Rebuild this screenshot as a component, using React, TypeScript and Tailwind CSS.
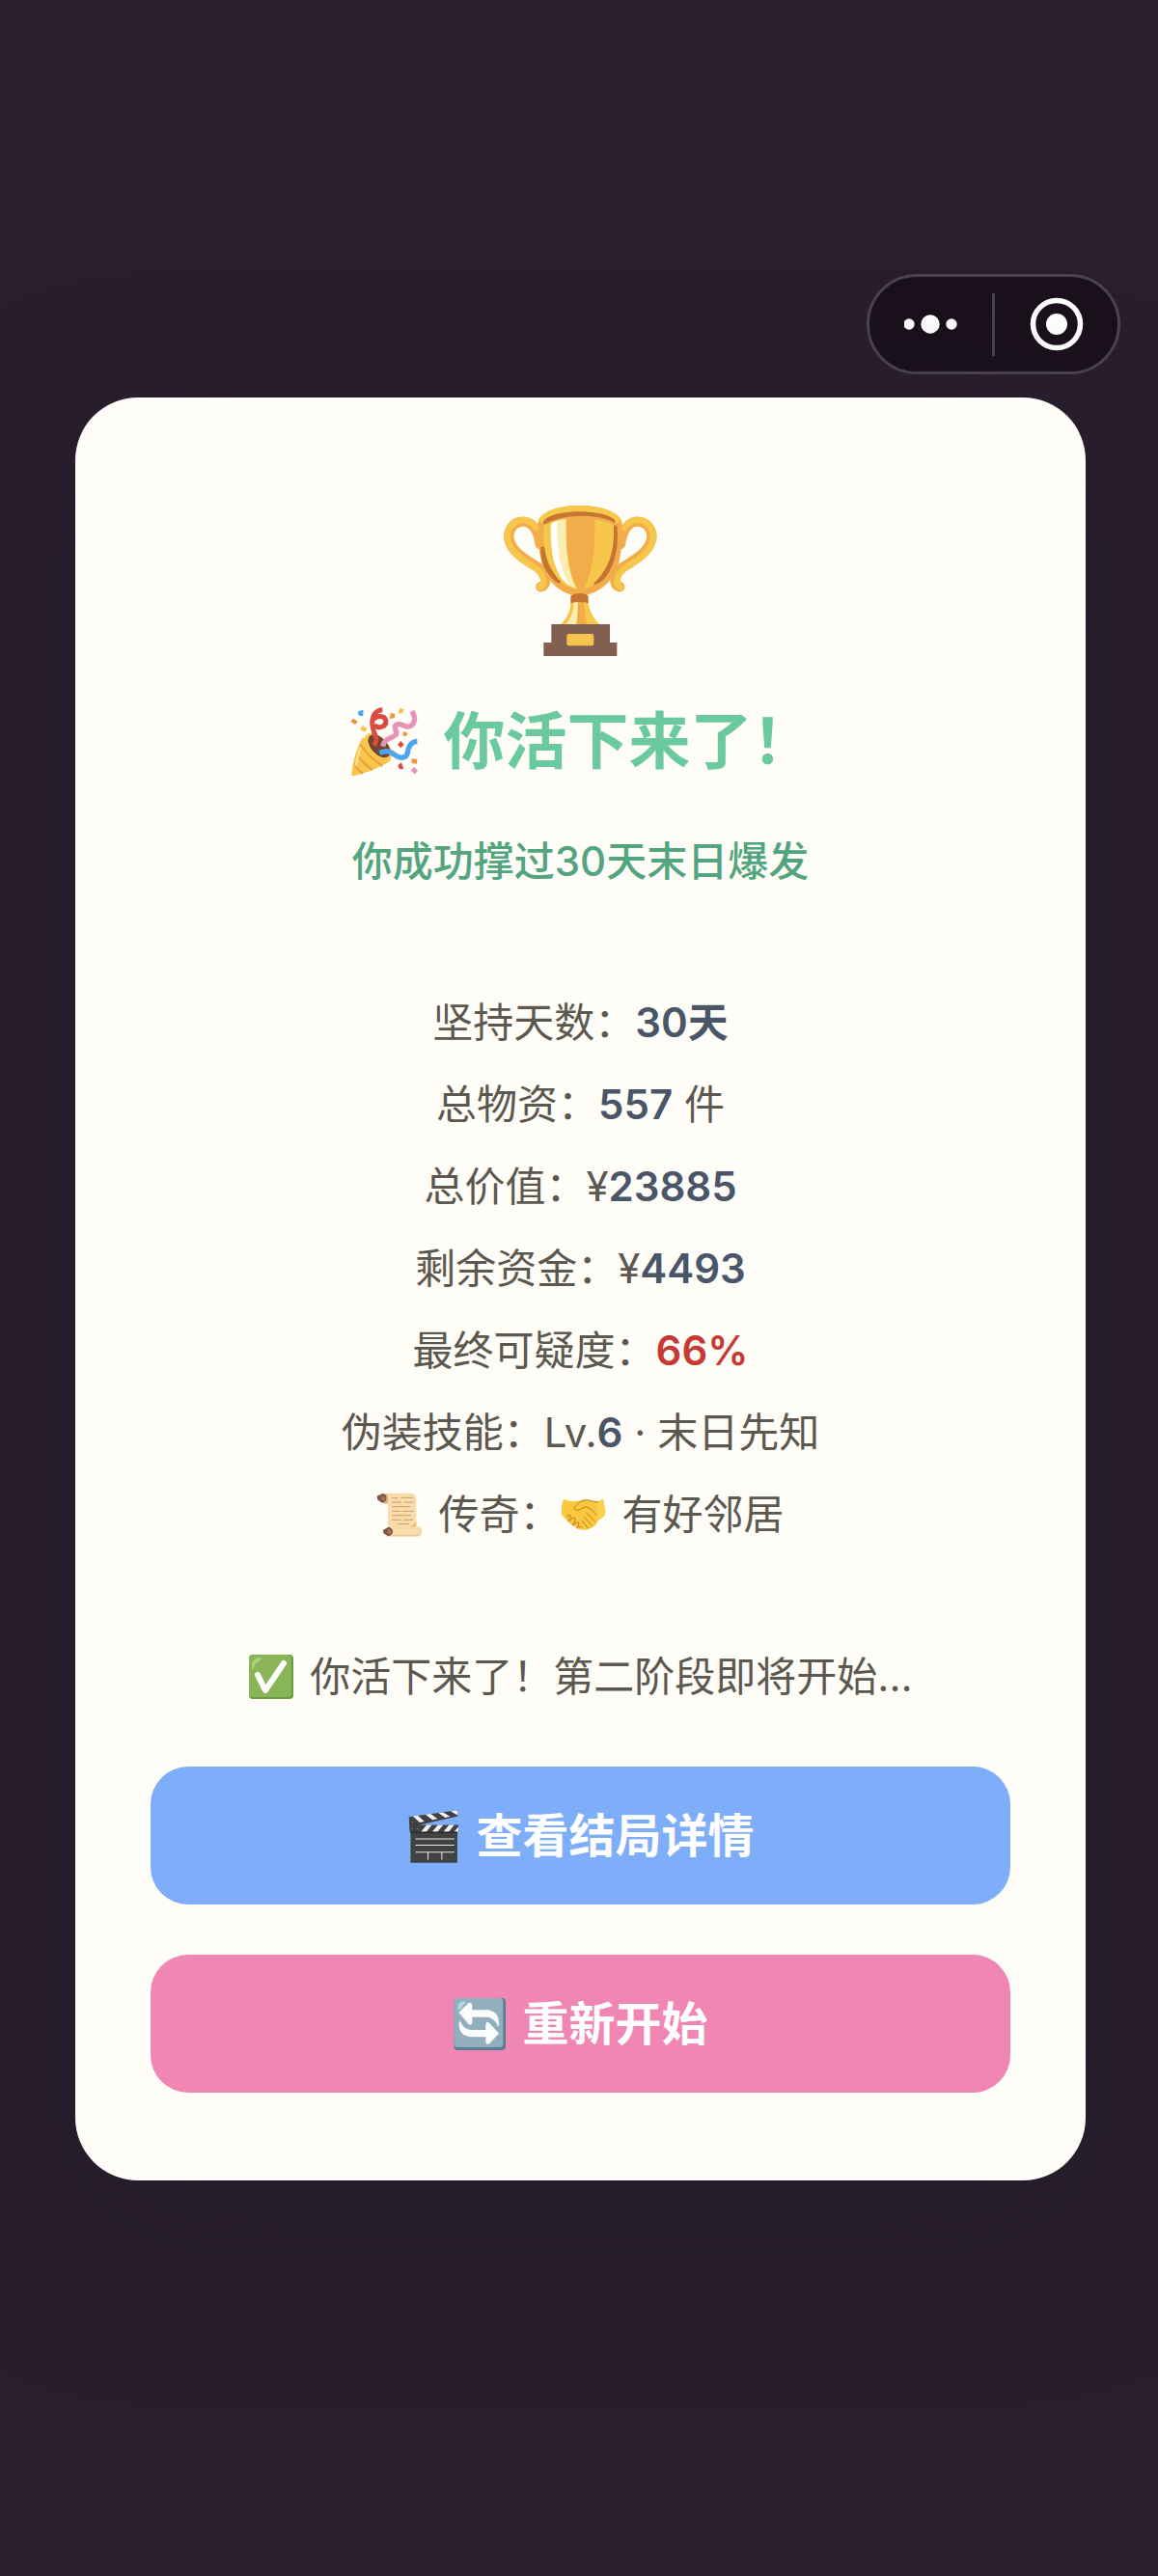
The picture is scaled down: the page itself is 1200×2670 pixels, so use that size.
import React from "react";

type IconProps = { className?: string };

const stats = [
  { label: "坚持天数：", value: "30天" },
  { label: "总物资：", value: "557", suffix: " 件" },
  { label: "总价值：¥", value: "23885" },
  { label: "剩余资金：¥", value: "4493" },
  { label: "最终可疑度：", value: "66%", danger: true },
  { label: "伪装技能：Lv.", value: "6", suffix: " · 末日先知" },
];

export default function App() {
  return (
    <div className="flex min-h-screen flex-col bg-[#2a1e2d] pt-[284px] pb-24 font-['Inter','Noto_Sans_CJK_SC',sans-serif]">
      <Capsule />

      <main className="mt-6 mr-[75px] ml-[78px] rounded-[65px] bg-[#fffdf7] px-[78px] pt-[110px] pb-[91px] text-center text-[#5c5850] shadow-[0_52px_156px_rgba(29,26,40,0.5)]">
        <Trophy className="mx-auto h-40 w-[162px]" />

        <h1 className="mt-[37px] flex items-center justify-center gap-6 text-[64px] leading-[98px] font-bold text-[#6bc99f]">
          <Popper className="size-[76px]" />
          你活下来了！
        </h1>

        <div className="mt-[33px] text-[42px] leading-[85px]">
          <p className="font-medium text-[#52a57e]">你成功撑过30天末日爆发</p>

          <ul className="mt-[82px]">
            {stats.map((s) => (
              <li key={s.label} className="whitespace-pre">
                {s.label}
                <strong
                  className={
                    s.danger
                      ? "font-semibold text-[#c53a32]"
                      : "font-semibold text-[#4a5568]"
                  }
                >
                  {s.value}
                </strong>
                {s.suffix}
              </li>
            ))}
            <li className="flex items-center justify-center gap-4">
              <Scroll className="size-12" />
              <span className="flex items-center">
                传奇：
                <Handshake className="size-12" />
              </span>
              有好邻居
            </li>
          </ul>

          <p className="mt-[83px] flex items-center justify-center gap-4">
            <Check className="size-12" />
            你活下来了！第二阶段即将开始...
          </p>
        </div>

        <div className="mt-[51px] flex flex-col gap-[52px] text-[48px] leading-[71px] font-semibold text-white">
          <button
            type="button"
            className="flex items-center justify-center gap-4 rounded-[39px] bg-[#7eaef9] py-9"
          >
            <Clapper className="size-14" />
            查看结局详情
          </button>
          <button
            type="button"
            className="flex items-center justify-center gap-4 rounded-[39px] bg-[#f086b4] py-9"
          >
            <Restart className="size-14" />
            重新开始
          </button>
        </div>
      </main>
    </div>
  );
}

// mini program menu in the top right corner
function Capsule() {
  return (
    <div className="mr-[39px] flex h-[104px] w-[263px] items-center self-end rounded-full border-[3px] border-[#4b444e] bg-[#1a111c]">
      <button type="button" aria-label="更多" className="flex flex-1 justify-center">
        <svg viewBox="0 0 56 20" className="h-5 w-14" fill="#fff">
          <circle cx="5" cy="10" r="5.7" />
          <circle cx="27" cy="10" r="9.7" />
          <circle cx="49" cy="10" r="5.7" />
        </svg>
      </button>
      <span className="h-[65px] w-[3px] bg-[#48414b]" />
      <button type="button" aria-label="关闭" className="flex flex-1 justify-center">
        <svg viewBox="0 0 56 56" className="size-14" fill="#fff">
          <circle cx="28" cy="28" r="24.5" fill="none" stroke="#fff" strokeWidth="5.5" />
          <circle cx="28" cy="28" r="11" />
        </svg>
      </button>
    </div>
  );
}

function Trophy({ className }: IconProps) {
  return (
    <svg viewBox="122 96 486 480" className={className} aria-hidden="true">
      {/* handles */}
      <g fill="none" strokeLinecap="round">
        <path d="M238 222C232 180 215 152 185 152C155 152 136 180 142 208C150 245 190 268 225 290C262 312 262 350 240 355" stroke="#f2ac49" strokeWidth="31" />
        <path d="M488 222C494 180 511 152 541 152C571 152 590 180 584 208C576 245 536 268 501 290C464 312 464 350 486 355" stroke="#f2ac49" strokeWidth="31" />
        <path d="M228 172C216 156 203 147 185 147C152 147 131 180 137 208C145 248 186 273 220 294C252 314 256 350 238 356" stroke="#f6c74a" strokeWidth="20" />
        <path d="M498 172C510 156 523 147 541 147C574 147 595 180 589 208C581 248 540 273 506 294C474 314 470 350 488 356" stroke="#f6c74a" strokeWidth="20" />
      </g>
      {/* bowl */}
      <path d="M232 150C246 118 300 102 360 102C420 102 478 118 492 150C496 190 492 250 480 290C462 345 410 382 360 382C312 382 262 345 246 290C234 250 228 190 232 150Z" fill="#f2ac49" />
      <path d="M232 150C246 118 300 102 360 102C420 102 478 118 492 150L474 158C440 120 282 120 248 158Z" fill="#f6c74a" />
      <path d="M248 158C246 152 252 145 260 140C300 114 420 114 462 140C470 145 474 152 470 156C420 124 300 128 252 160Z" fill="#c5752f" />
      <path d="M250 166C282 136 436 136 468 166C474 230 460 300 425 335C405 353 380 362 360 362C335 362 305 350 285 322C250 280 246 220 250 166Z" fill="#f6c74a" />
      <path d="M272 160C286 148 304 144 320 143V220C322 285 335 330 352 360C322 355 294 320 280 270C272 235 270 190 272 160Z" fill="#fbeeb2" />
      <path d="M272 160C278 153 284 151 291 149C289 235 300 310 334 352C310 342 292 318 280 270C272 235 270 190 272 160Z" fill="#fff" />
      <path d="M319 143Q364 139 408 146C410 235 400 320 372 362Q364 366 353 360C330 315 317 250 319 143Z" fill="#f2ac49" />
      <path d="M240 232C246 228 250 228 252 234C258 280 276 310 303 340C300 344 296 344 290 341C256 315 238 280 240 232Z" fill="#c5752f" />
      <path d="M467 168C472 160 478 164 478 174C484 250 458 335 406 349C402 346 406 342 412 337C452 296 470 245 467 168Z" fill="#c5752f" />
      {/* stem */}
      <path d="M333 404H388C392 432 405 453 423 472H302C320 453 332 432 333 404Z" fill="#f6c74a" />
      <path d="M344 402H356V472H318C334 452 342 432 344 402Z" fill="#fbeeb2" />
      <path d="M355 402H374C375 430 380 453 384 472H351C354 450 355 430 355 402Z" fill="#f2ac49" />
      <path d="M333 384C340 372 381 372 388 384V406Q360 398 333 406Z" fill="#c5752f" />
      <path d="M273 471H455V528H477V570H249V528H273Z" fill="#835f52" />
      <rect x="321" y="501" width="84" height="37" rx="6" fill="#f4c44c" />
    </svg>
  );
}

function Popper({ className }: IconProps) {
  return (
    <svg viewBox="56 34 228 228" className={className} aria-hidden="true">
      <path d="M104 136C84 170 72 215 69 252Q69 258 78 256C118 246 165 228 192 208Z" fill="#f6c74a" />
      <g fill="none" stroke="#eda041" strokeWidth="7">
        <path d="M97 160Q115 190 165 226" />
        <path d="M86 190Q102 216 134 238" />
        <path d="M77 218Q86 238 104 249" />
      </g>
      <path d="M96 168L82 226" stroke="#fbe08b" strokeWidth="7" />
      <ellipse cx="151" cy="168" rx="32" ry="53" transform="rotate(-43 151 168)" fill="#f6c74a" />
      <ellipse cx="155" cy="164" rx="25" ry="43" transform="rotate(-43 155 164)" fill="#704430" />
      <g fill="none" strokeWidth="16">
        <path d="M138 162C158 140 132 122 133 91C134 62 150 51 165 51M137 82C145 69 171 66 175 84C179 103 153 113 140 98" stroke="#dc4b3f" strokeWidth="15" />
        <path d="M166 165C172 138 193 142 207 129C215 119 196 108 207 98C222 87 241 116 258 97C270 83 264 69 257 55" stroke="#e693b7" />
        <path d="M156 185C180 176 187 180 204 192C220 204 239 202 243 185C246 162 257 150 273 149" stroke="#4ca5ee" />
      </g>
      <path d="M89 56L105 51V71L91 69Z" fill="#4ca5ee" />
      <path d="M74 78L88 87L81 97L66 88Z" fill="#ea963a" />
      <path d="M103 100L118 110L110 120L96 112Z" fill="#f4c44c" />
      <path d="M190 61L204 64L202 77L188 79Z" fill="#ea963a" />
      <path d="M219 45L232 50L226 63L214 62Z" fill="#f4c44c" />
      <path d="M231 118L244 124L238 134L228 131Z" fill="#ea963a" />
      <path d="M222 148L232 159L222 170L212 159Z" fill="#dc4b3f" />
      <path d="M224 215L231 236L217 235L213 224Z" fill="#dc4b3f" />
      <path d="M255 203L273 205L272 219L256 217Z" fill="#ea963a" />
      <path d="M263 228L275 240L266 251L253 240Z" fill="#e693b7" />
    </svg>
  );
}

function Scroll({ className }: IconProps) {
  return (
    <svg viewBox="154 736 144 144" className={className} aria-hidden="true">
      <path d="M172 741H264Q278 745 278 762V850H190V773Q178 775 172 770Z" fill="#f9dcab" />
      <path d="M186 743Q194 758 188 774Q180 775 174 769V744Z" fill="#e0b27a" />
      <path d="M278 828V850H240Q268 846 278 828Z" fill="#f2bd6c" />
      <path d="M186 847L288 845Q297 848 296 860Q294 876 284 876H186Z" fill="#f9dcab" />
      <path d="M188 872H288" stroke="#edc68e" strokeWidth="4" />
      <path d="M156 750L174 742Q186 745 185 758Q182 771 173 771L158 762Z" fill="#7d5544" />
      <circle cx="175" cy="757" r="7" fill="#a67558" />
      <path d="M175 856L192 846Q206 850 205 862Q200 875 190 874L176 866Z" fill="#7d5544" />
      <circle cx="194" cy="861" r="7" fill="#a67558" />
      <g stroke="#c99d6c" strokeWidth="3">
        <path d="M201 756H220M230 755H268M202 769H232M240 769H270M202 783H260M202 797H228M236 797H270M202 810H262M202 824H230M238 824H268M218 837H256" />
      </g>
    </svg>
  );
}

function Handshake({ className }: IconProps) {
  return (
    <svg viewBox="730 738 144 144" className={className} aria-hidden="true">
      <path d="M739 762Q760 770 780 767L800 765Q815 762 828 768Q845 771 862 762L869 800Q868 818 850 824L838 842Q820 858 802 857Q776 855 752 830L733 810Q731 782 739 762Z" fill="#f9c83c" />
      <path d="M862 762L869 800Q868 818 850 824L838 812Q848 784 842 770Z" fill="#fbd04c" />
      <g fill="none" stroke="#ba7b25" strokeWidth="3" strokeLinecap="round">
        <path d="M800 765Q780 775 772 789Q776 799 790 794L806 785Q830 792 842 812" />
        <path d="M800 765Q815 762 828 768L846 771" />
        <path d="M810 805L836 830M802 816L827 843M796 828L814 851" />
        <path d="M748 816Q754 808 760 812Q764 817 754 828M757 830Q768 814 775 822Q778 829 767 842M770 843Q780 829 787 836Q788 843 780 851M784 853Q792 842 798 849" />
      </g>
    </svg>
  );
}

function Check({ className }: IconProps) {
  return (
    <svg viewBox="0 0 48 48" className={className} aria-hidden="true">
      <rect x="1" y="1" width="46" height="46" rx="4" fill="#689f43" />
      <rect x="1" y="1" width="44" height="44" rx="4" fill="#8ab556" />
      <path d="M4 14Q3 5 12 4Q16 5 11 8Q7 10 6 15Q4 18 4 14Z" fill="#abcf83" />
      <path d="M10 22L18 38L37 10" fill="none" stroke="#fff" strokeWidth="6" strokeLinecap="round" strokeLinejoin="round" />
    </svg>
  );
}

function Clapper({ className }: IconProps) {
  return (
    <svg viewBox="62 50 164 164" className={className} aria-hidden="true">
      <path d="M70 74L218 54V72L103 98H220V119H217V213H75V119H72Z" fill="#404143" />
      <g fill="#f4f4f4">
        <path d="M82 72L97 70L117 88L103 91Z" />
        <path d="M120 67L136 65L157 80L142 83Z" />
        <path d="M159 62L174 60L195 73L180 76Z" />
        <path d="M197 57L214 54L218 57V69Z" />
        <path d="M124 98H140L123 119H107Z" />
        <path d="M158 98H174L157 119H141Z" />
        <path d="M192 98H208L191 119H175Z" />
        <path d="M220 104V119H208Z" />
      </g>
      <path d="M75 121H217" stroke="#222" strokeWidth="3" />
      <path d="M90 141H208M90 160H208M90 181H208M128 181V204M170 181V204" stroke="#e8e8e8" strokeWidth="3" />
      <g fill="#77797b">
        <circle cx="81" cy="90" r="2" />
        <circle cx="81" cy="110" r="2" />
        <circle cx="96" cy="110" r="2" />
      </g>
    </svg>
  );
}

function Restart({ className }: IconProps) {
  return (
    <svg viewBox="86 63 168 168" className={className} aria-hidden="true">
      <rect x="90" y="66" width="161" height="162" rx="12" fill="#567d91" />
      <rect x="90" y="66" width="153" height="153" rx="11" fill="#93afbd" />
      <path d="M102 98Q101 76 124 76Q132 80 120 88L105 104Z" fill="#b5d5e2" />
      <path d="M105 111L136 81Q146 77 147 88V103H192Q231 105 230 146L228 156Q217 127 192 125H147V142Q145 154 136 147Z" fill="#fafcfd" />
      <path d="M230 176L200 208Q189 214 189 202V187H142Q107 184 106 148L108 134Q118 162 142 165H189V149Q190 136 200 143Z" fill="#fafcfd" />
    </svg>
  );
}
